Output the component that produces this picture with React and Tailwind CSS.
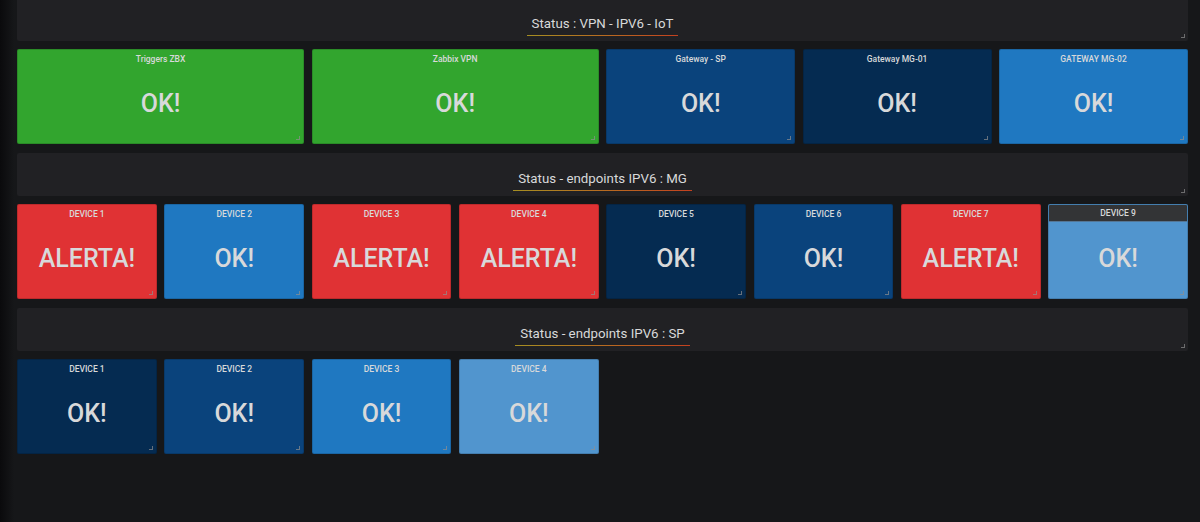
import React from "react";

const colors = {
  green: "bg-[#32a52e]",
  red: "bg-[#e03234]",
  navy: "bg-[#052b51]",
  mid: "bg-[#0a437c]",
  blue: "bg-[#1f78c1]",
  light: "bg-[#5195ce]",
};

const rows = [
  {
    title: "Status : VPN - IPV6 - IoT",
    cards: [
      { name: "Triggers ZBX", value: "OK!", color: "green", span: "col-span-6" },
      { name: "Zabbix VPN", value: "OK!", color: "green", span: "col-span-6" },
      { name: "Gateway - SP", value: "OK!", color: "mid", span: "col-span-4" },
      { name: "Gateway MG-01", value: "OK!", color: "navy", span: "col-span-4" },
      { name: "GATEWAY MG-02", value: "OK!", color: "blue", span: "col-span-4" },
    ],
  },
  {
    title: "Status - endpoints IPV6 : MG",
    cards: [
      { name: "DEVICE 1", value: "ALERTA!", color: "red", span: "col-span-3" },
      { name: "DEVICE 2", value: "OK!", color: "blue", span: "col-span-3" },
      { name: "DEVICE 3", value: "ALERTA!", color: "red", span: "col-span-3" },
      { name: "DEVICE 4", value: "ALERTA!", color: "red", span: "col-span-3" },
      { name: "DEVICE 5", value: "OK!", color: "navy", span: "col-span-3" },
      { name: "DEVICE 6", value: "OK!", color: "mid", span: "col-span-3" },
      { name: "DEVICE 7", value: "ALERTA!", color: "red", span: "col-span-3" },
      { name: "DEVICE 9", value: "OK!", color: "light", span: "col-span-3", hover: true },
    ],
  },
  {
    title: "Status - endpoints IPV6 : SP",
    cards: [
      { name: "DEVICE 1", value: "OK!", color: "navy", span: "col-span-3" },
      { name: "DEVICE 2", value: "OK!", color: "mid", span: "col-span-3" },
      { name: "DEVICE 3", value: "OK!", color: "blue", span: "col-span-3" },
      { name: "DEVICE 4", value: "OK!", color: "light", span: "col-span-3" },
    ],
  },
];

const ResizeHandle = () => (
  <div className="absolute right-[3px] bottom-[3px] w-[4px] h-[4px] border-r-[1.5px] border-b-[1.5px] border-[#8e8e8e]/70" />
);

const StatCard = ({ card }) => (
  <div
    className={`${card.span} ${colors[card.color]} relative h-[95px] flex flex-col rounded-[2px] border border-black/15 overflow-hidden`}
  >
    <div
      className={`h-[17px] shrink-0 flex items-center justify-center pt-[1px] text-[8.5px] font-medium text-[#d8d9da] ${
        card.hover ? "bg-[#333436] border-b border-[#6aa3d6]/60" : ""
      }`}
    >
      {card.name}
    </div>
    <div className="flex-1 flex items-center justify-center pb-[2px] text-[25px] font-medium text-[#d8d9da]">
      {card.value}
    </div>
    <ResizeHandle />
  </div>
);

const SectionHeader = ({ title }) => (
  <div className="relative h-[43px] bg-[#212124] rounded-[2px] flex justify-center pt-[18px]">
    <div className="flex flex-col items-stretch">
      <span className="px-[5px] text-[13.3px] leading-[16px] text-[#d8d9da]">{title}</span>
      <div className="mt-[3px] h-px bg-gradient-to-r from-[#a58e22] to-[#c3401f]" />
    </div>
    <ResizeHandle />
  </div>
);

export default function App() {
  return (
    <div
      className="w-[1200px] h-[522px] bg-[#161719] flex overflow-hidden"
      style={{ fontFamily: "Roboto, 'Liberation Sans', sans-serif" }}
    >
      <div className="w-[17px] shrink-0 flex">
        <div className="w-[14px] h-full bg-gradient-to-r from-[#0a0a0c] to-[#161719]" />
      </div>
      <div className="w-[1171px] shrink-0 -mt-[2px] flex flex-col">
        {rows.map((row) => (
          <div key={row.title} className="flex flex-col gap-2 mb-[9px]">
            <SectionHeader title={row.title} />
            <div className="grid grid-cols-24 gap-x-[7.5px]">
              {row.cards.map((card) => (
                <StatCard key={card.name} card={card} />
              ))}
            </div>
          </div>
        ))}
      </div>
      <div className="flex-1" />
    </div>
  );
}
